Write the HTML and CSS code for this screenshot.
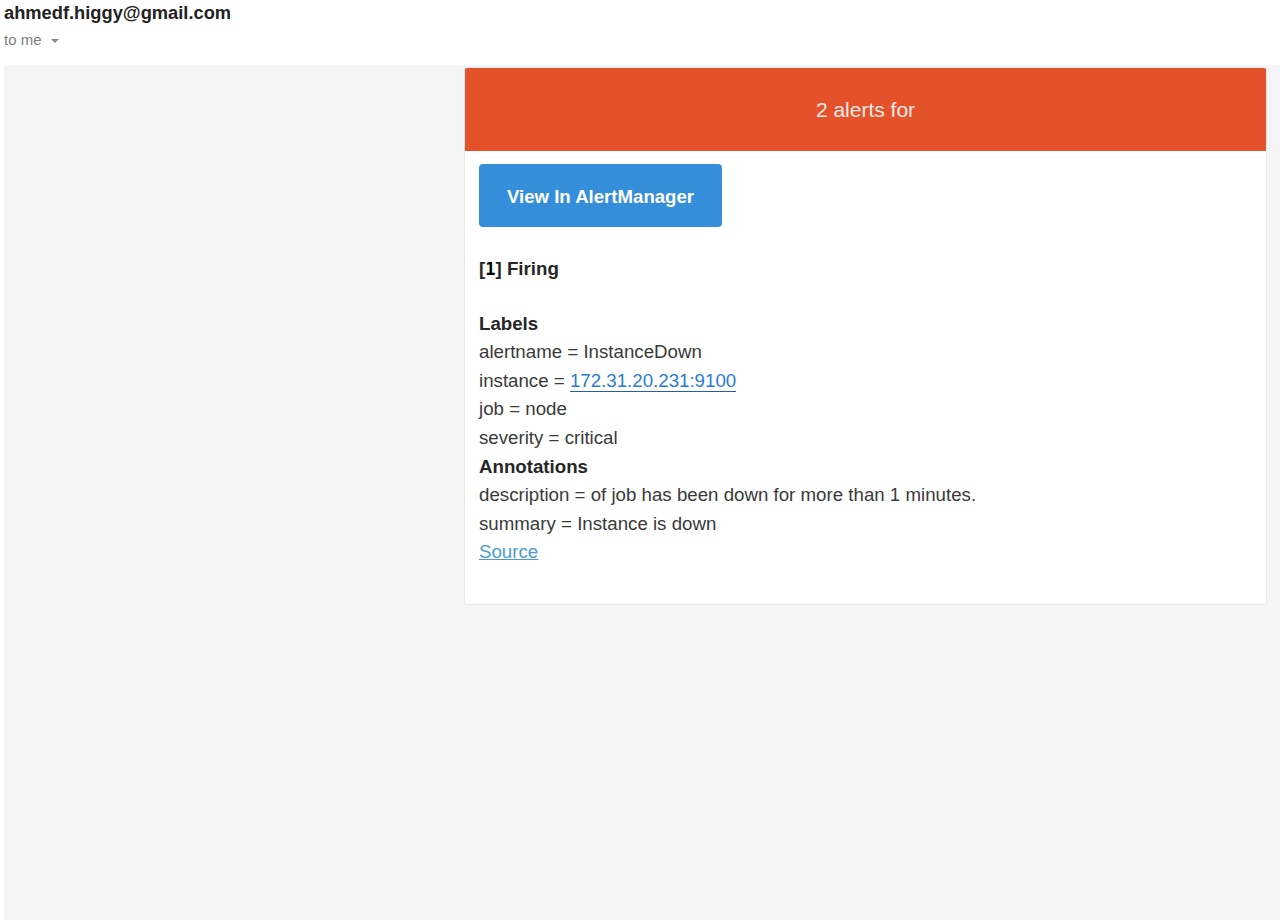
FILE: index.html
```html
<!DOCTYPE html>
<html lang="en">
<head>
<meta charset="utf-8">
<title>Alert</title>
<link rel="stylesheet" href="styles.css">
</head>
<body>
<div class="sender">
  <div class="from">ahmedf.higgy@gmail.com</div>
  <div class="to">to me <span class="caret"></span></div>
</div>
<div class="mail-body">
  <div class="card">
    <div class="card-header">2 alerts for</div>
    <div class="card-content">
      <a class="btn" href="#">View In AlertManager</a>
      <div class="block firing"><strong>[<span class="num">1</span>] Firing</strong></div>
      <div class="block">
        <strong>Labels</strong><br>
        alertname = InstanceDown<br>
        instance = <a class="ip" href="#">172.31.20.231:9100</a><br>
        job = node<br>
        severity = critical<br>
        <strong>Annotations</strong><br>
        description = of job has been down for more than 1 minutes.<br>
        summary = Instance is down<br>
        <a class="source" href="#">Source</a>
      </div>
    </div>
  </div>
</div>
</body>
</html>
```
FILE: styles.css
```css
html, body {
  margin: 0;
  padding: 0;
  background: #ffffff;
  font-family: "Liberation Sans", Arial, sans-serif;
}
.sender {
  height: 65px;
  padding-left: 4px;
  box-sizing: border-box;
}
.from {
  padding-top: 3px;
  font-size: 18.3px;
  line-height: 20px;
  font-weight: bold;
  color: #222222;
}
.to {
  margin-top: 8px;
  font-size: 15px;
  line-height: 18px;
  color: #808080;
  display: flex;
  align-items: center;
  gap: 9px;
}
.caret {
  width: 0;
  height: 0;
  border-left: 4px solid transparent;
  border-right: 4px solid transparent;
  border-top: 4px solid #888888;
  margin-top: 1px;
}
.mail-body {
  margin-left: 4px;
  height: 855px;
  background: #f5f5f5;
  padding: 2px 0 0 460px;
  box-sizing: border-box;
}
.card {
  width: 803px;
  background: #ffffff;
  border: 1px solid #e9e9e9;
  border-radius: 3px;
  overflow: hidden;
  box-sizing: border-box;
}
.card-header {
  height: 83px;
  background: #e4522c;
  color: #fbe9e4;
  font-size: 21px;
  display: flex;
  align-items: center;
  justify-content: center;
}
.card-content {
  padding: 13px 14px 37px;
  font-size: 18.7px;
  line-height: 28.6px;
  color: #3a3a3a;
}
.card-content strong {
  color: #262626;
}
.btn {
  display: flex;
  align-items: center;
  justify-content: center;
  width: 243px;
  height: 63px;
  padding-top: 3px;
  box-sizing: border-box;
  background: #348eda;
  border-radius: 4px;
  color: #ffffff;
  font-weight: bold;
  font-size: 18.6px;
  text-decoration: none;
  margin-bottom: 28px;
}
.firing {
  margin-bottom: 26px;
}
.num {
  font-family: "DejaVu Sans Mono", monospace;
  font-size: 17px;
  color: #000000;
}
.ip {
  color: #2a7bd6;
  text-decoration: none;
  border-bottom: 1px solid #1f5fa8;
  padding-bottom: 0;
}
.source {
  color: #4a9ad6;
  text-decoration: underline;
}
```
